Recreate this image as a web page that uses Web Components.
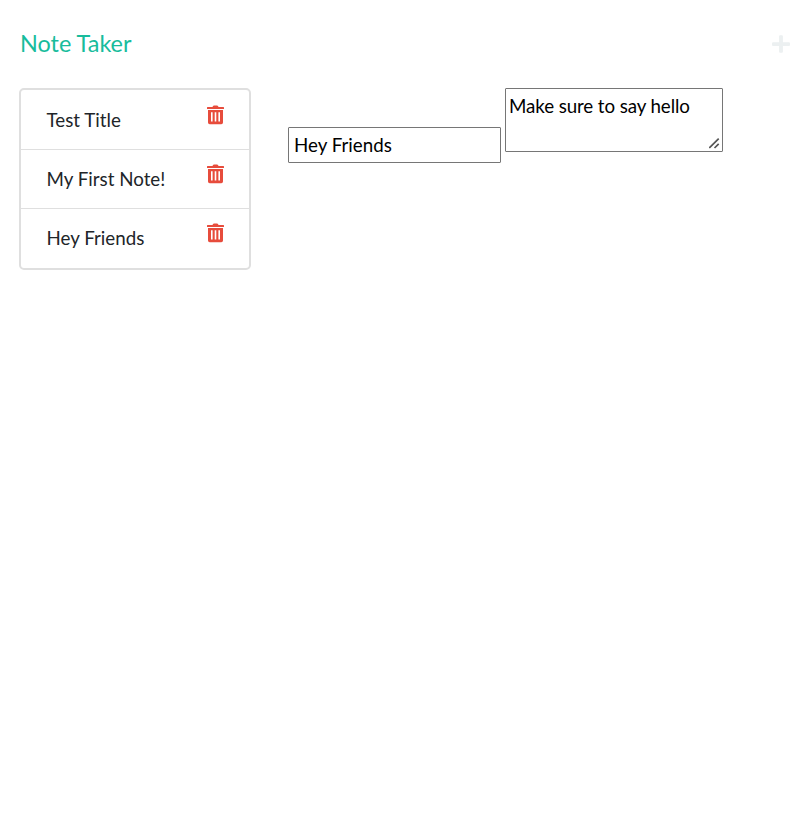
<!DOCTYPE html>
<html lang="en">
<head>
<meta charset="utf-8">
<title>Note Taker</title>
<style>
body{margin:0;background:#fff;color:#212529;font:18.75px/28.125px Lato,sans-serif}
</style>
</head>
<body>
<note-app></note-app>
<script>
const icons = {
  trash: {box: '0 0 17 20', path: 'M5.5 2L6 1Q6.3.5 7 .5h3q.7 0 1 .5l.5 1h4.9q.6 0 .6.6V4H0V2.6Q0 2 .6 2zM1 5h15v12.5q0 1.7-1.7 1.7H2.7Q1 19.2 1 17.5zM4 7.2v9.3h1.6V7.2zm3.7 0v9.3h1.6V7.2zm3.7 0v9.3H13V7.2z'},
  plus: {box: '0 0 448 512', path: 'M416 208H272V64c0-17.67-14.33-32-32-32h-32c-17.67 0-32 14.33-32 32v144H32c-17.67 0-32 14.33-32 32v32c0 17.67 14.33 32 32 32h144v144c0 17.67 14.33 32 32 32h32c17.67 0 32-14.33 32-32V304h144c17.67 0 32-14.33 32-32v-32c0-17.67-14.33-32-32-32z'}
};
class Base extends HTMLElement {
  connectedCallback() {
    if (!this.shadowRoot) this.attachShadow({mode: 'open'}).innerHTML = this.view();
  }
}
customElements.define('note-icon', class extends Base {
  view() {
    const icon = icons[this.getAttribute('name')];
    return `<style>:host{display:block;width:17px;height:20px}svg{display:block;width:100%;height:100%}</style>
    <svg viewBox="${icon.box}" fill="currentColor" fill-rule="evenodd" preserveAspectRatio="none"><path d="${icon.path}"/></svg>`;
  }
});
customElements.define('note-header', class extends Base {
  view() {
    return `<style>:host{display:flex;justify-content:space-between;align-items:center;box-sizing:border-box;height:88px;padding:0 19px 0 20px}
    .brand{font-size:23.4375px;line-height:35px;padding-bottom:2px;color:#18bc9c}note-icon{color:#ecf0f1;width:18px;height:20px}</style>
    <span class="brand"><slot></slot></span><note-icon name="plus"></note-icon>`;
  }
});
customElements.define('note-item', class extends Base {
  view() {
    return `<style>:host{display:flex;justify-content:space-between;align-items:flex-start;box-sizing:border-box;height:59px;padding:14px 25px 0 25.5px}
    span{padding-top:1px}note-icon{color:#e74c3c}</style><span><slot></slot></span><note-icon name="trash"></note-icon>`;
  }
});
customElements.define('note-list', class extends Base {
  view() {
    return `<style>:host{display:block;box-sizing:border-box;width:232px;height:182px;border:2px solid #dfdfdf;border-radius:5px;overflow:hidden}
    ::slotted(note-item:not(:last-child)){border-bottom:1px solid #dfdfdf}
    ::slotted(note-item:first-child){height:60px;padding-top:15px}</style><slot></slot>`;
  }
});
customElements.define('note-editor', class extends Base {
  view() {
    return `<style>:host{display:flex;align-items:flex-start;gap:4px}
    input,textarea{display:block;box-sizing:border-box;margin:0;border:1px solid #767676;border-radius:1px;background:#fff;color:#000;font:inherit;outline:0}
    input{width:213px;height:36px;padding:0 5px 2px;margin-top:39px}
    textarea{width:218px;height:64px;padding:3px;overflow:auto;resize:none;letter-spacing:-.1px}
    .body{position:relative}svg{position:absolute;right:3px;bottom:2px;pointer-events:none}</style>
    <input value="Hey Friends" aria-label="Note title"><div class="body"><textarea aria-label="Note text">Make sure to say hello</textarea>
    <svg width="11" height="12" fill="none" stroke="#555" stroke-width="1.7"><path d="M.3 10L9.7.6M5.5 10l4.2-4.2"/></svg></div>`;
  }
});
customElements.define('note-app', class extends Base {
  view() {
    return `<style>:host{display:block}main{display:flex;align-items:flex-start;gap:37px;padding-left:19px}</style>
    <note-header>Note Taker</note-header>
    <main><note-list><note-item>Test Title</note-item><note-item>My First Note!</note-item><note-item>Hey Friends</note-item></note-list>
    <note-editor></note-editor></main>`;
  }
});
</script>
</body>
</html>
